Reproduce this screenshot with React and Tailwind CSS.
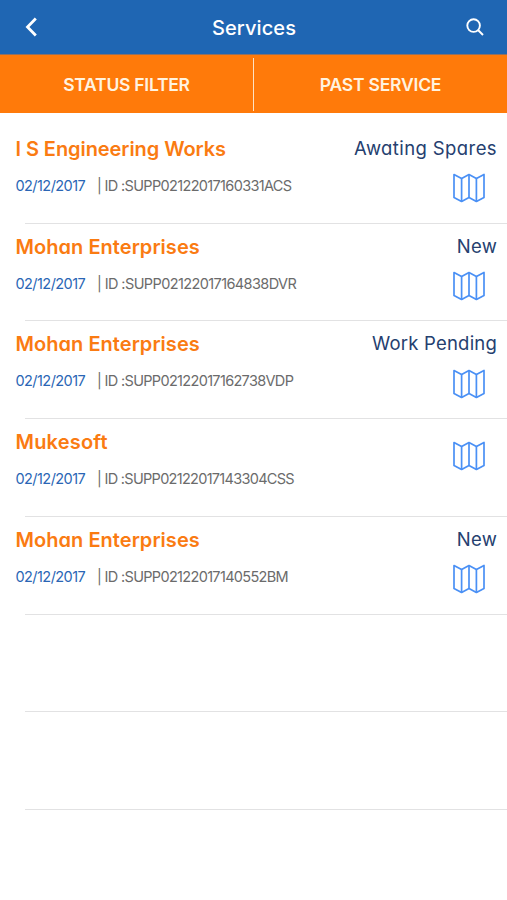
const services = [
  { name: 'I S Engineering Works', track: 'tracking-[-0.07px]', id: 'SUPP02122017160331ACS', idTrack: 'tracking-[-0.66px]', status: 'Awating Spares', statusTrack: 'tracking-[0.4px]' },
  { name: 'Mohan Enterprises', track: 'tracking-[0.05px]', id: 'SUPP02122017164838DVR', idTrack: 'tracking-[-0.6px]', status: 'New', statusTrack: 'tracking-[0.2px]' },
  { name: 'Mohan Enterprises', track: 'tracking-[0.05px]', id: 'SUPP02122017162738VDP', idTrack: 'tracking-[-0.67px]', status: 'Work Pending', statusTrack: 'tracking-[0.2px]' },
  { name: 'Mukesoft', track: 'tracking-[0.2px]', id: 'SUPP02122017143304CSS', idTrack: 'tracking-[-0.7px]', status: '', statusTrack: '' },
  { name: 'Mohan Enterprises', track: 'tracking-[0.05px]', id: 'SUPP02122017140552BM', idTrack: 'tracking-[-0.67px]', status: 'New', statusTrack: 'tracking-[0.2px]' },
];

function MapIcon() {
  return (
    <svg className="mr-3 h-[30px] w-8" viewBox="0 0 32 30" fill="none" stroke="#4a90f5" strokeWidth="1.7" strokeLinejoin="round">
      <path d="M1 1.5 8.6 5.5 16 1.5 23.4 5.5 31 1.5V24.5L23.4 28.5 16 24.5 8.6 28.5 1 24.5Z" />
      <path d="M8.6 5.5V28.5M16 1.5V24.5M23.4 5.5V28.5" />
    </svg>
  );
}

function ServiceRow({ item }) {
  return (
    <li className="flex h-[97.75px] flex-col">
      <div className="flex flex-1 justify-between pl-[15.5px] pr-2.5">
        <div className="flex flex-col whitespace-nowrap pt-[9px]">
          <h2 className={`text-[20px] font-semibold leading-7 text-[#fa7b12] ${item.track}`}>{item.name}</h2>
          <p className="mt-[13px] flex text-[14.5px] leading-5">
            <span className="w-[81.5px] tracking-[-0.56px] text-[#2a66b5]">02/12/2017</span>
            <span className={`text-[#6b6b6b] ${item.idTrack}`}>| ID :{item.id}</span>
          </p>
        </div>
        <div className="flex flex-col items-end whitespace-nowrap">
          {item.status ? (
            <>
              <span className={`mt-2 text-[18.5px] leading-7 text-[#25406f] ${item.statusTrack}`}>{item.status}</span>
              <div className="mt-[11.5px]"><MapIcon /></div>
            </>
          ) : (
            <div className="mt-[22px]"><MapIcon /></div>
          )}
        </div>
      </div>
      <div className="ml-[25px] h-px bg-[#e2e2e3]" />
    </li>
  );
}

export default function App() {
  return (
    <main className="h-[900px] w-[507px] overflow-hidden bg-white font-['Inter',sans-serif] [font-feature-settings:'cv11']">
      <header className="flex h-[54px] items-center justify-between bg-[#1f66b3] pl-[25px] pr-[23px] text-white">
        <svg className="h-5 w-3" viewBox="0 0 12 20" fill="none" stroke="currentColor" strokeWidth="2.8">
          <path d="M10.8 1.5 2.5 10l8.3 8.5" />
        </svg>
        <h1 className="ml-[5px] mt-0.5 text-[20px] font-medium leading-7 tracking-[0.1px] [font-feature-settings:normal]">Services</h1>
        <svg className="h-[18px] w-[18px]" viewBox="0 0 18 18" fill="none" stroke="currentColor" strokeWidth="1.9">
          <circle cx="7.6" cy="7.6" r="6.3" />
          <path d="m12 12 5 5" />
        </svg>
      </header>
      <nav className="flex h-[59px] items-center border-t border-[#8f7062] bg-[#ff7a0a] text-[17.5px] font-semibold text-[#fff3e0]">
        <button className="flex-1 whitespace-nowrap pt-0.5 text-center tracking-[-0.25px]">STATUS FILTER</button>
        <span className="h-[53px] w-px bg-[#ffe3c4]" />
        <button className="flex-1 whitespace-nowrap pt-0.5 text-center tracking-[-0.2px]">PAST SERVICE</button>
      </nav>
      <ul className="pt-[12.75px]">
        {services.map((item) => <ServiceRow key={item.id} item={item} />)}
        {[1, 2].map((n) => (
          <li key={n} className="flex h-[97.75px] items-end pl-[25px]">
            <div className="h-px flex-1 bg-[#e2e2e3]" />
          </li>
        ))}
      </ul>
    </main>
  );
}
